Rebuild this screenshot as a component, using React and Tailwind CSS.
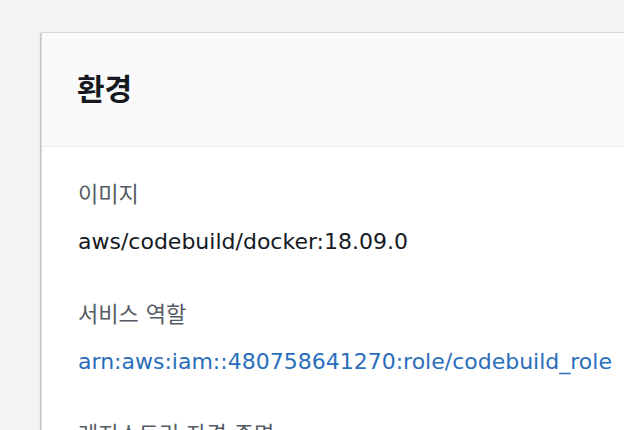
export default function App() {
  const font = { fontFamily: '"DejaVu Sans", "Noto Sans CJK KR", sans-serif' }
  return (
    <div className="h-[430px] w-[624px] overflow-hidden bg-[#f2f3f3] pl-[41px] pt-[32px]" style={font}>
      <div className="w-[700px] border-l border-t border-[#d5dbdb] bg-white shadow-[0_1px_1px_0_rgba(0,28,36,0.3),-1px_1px_1px_0_rgba(0,28,36,0.15)]">
        {/* Header */}
        <div className="flex h-[114px] items-center border-b border-[#eaeded] bg-[#fafafa] pl-[35px]">
          <h2 className="text-[30px] font-bold leading-none text-[#16191f]">환경</h2>
        </div>

        {/* Body */}
        <div className="flex flex-col pl-[36px] pt-[34px]">
          <div className="text-[22px] leading-[28px] text-[#545b64]">이미지</div>
          <div className="mt-[19px] whitespace-nowrap text-[22px] leading-[28px] text-[#16191f]">aws/codebuild/docker:18.09.0</div>

          <div className="mt-[45px] text-[22px] leading-[28px] text-[#545b64]">서비스 역할</div>
          <a className="mt-[19px] whitespace-nowrap text-[22px] leading-[28px] text-[#2a6ebb]" href="#">
            arn:aws:iam::480758641270:role/codebuild_role
          </a>

          <div className="mt-[45px] text-[22px] leading-[28px] text-[#545b64]">레지스트리 자격 증명</div>
        </div>
      </div>
    </div>
  )
}
